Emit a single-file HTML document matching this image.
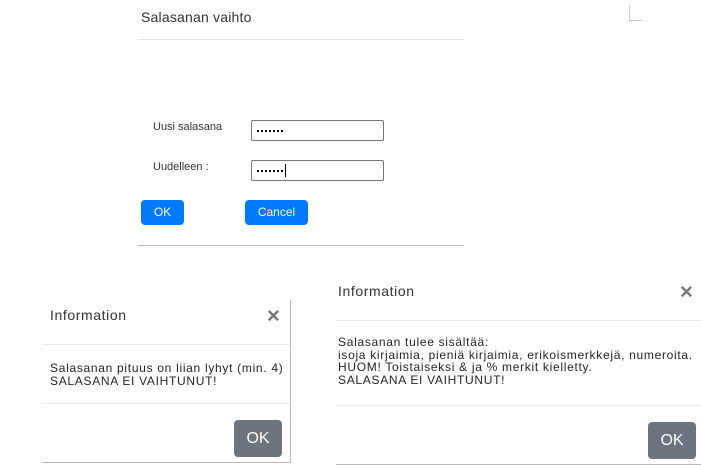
<!DOCTYPE html>
<html><head><style>
body{margin:0;width:701px;height:466px;background:#fff;position:relative;overflow:hidden;font-family:"Liberation Sans",sans-serif;color:#212529}
.a{position:absolute}
.inp{position:absolute;border:1px solid #767676;border-radius:2px;width:133px;height:21px;box-sizing:border-box;padding-left:5px}
.d{display:inline-block;width:2px;height:2px;background:#000;margin-right:2px;vertical-align:middle}
.inp .w{position:absolute;left:5px;top:9px;line-height:0}
.btn{position:absolute;background:#007bff;color:#fff;border-radius:4px;font-size:12px;text-align:center}
.gb{position:absolute;background:#6c757d;color:#fff;border-radius:4px;font-size:16px;text-align:center;width:48px;height:37px;line-height:37px}
.x{position:absolute;font-size:22px;color:#777;font-weight:bold}
.t{position:absolute;font-size:12px;line-height:12.5px;color:#212529;letter-spacing:0.7px}
</style></head><body>
<div class="a" style="left:141px;top:9px;font-size:14px;color:#333;letter-spacing:0.2px">Salasanan vaihto</div>
<div class="a" style="left:138px;top:39px;width:326px;height:1px;background:#e6e6e6"></div>
<div class="a" style="left:629px;top:5px;width:1px;height:15px;background:#ccc"></div>
<div class="a" style="left:629px;top:20px;width:13px;height:1px;background:#ccc"></div>
<div class="a" style="left:153px;top:121px;font-size:11px;color:#333">Uusi salasana</div>
<div class="a" style="left:153px;top:161px;font-size:11px;color:#333">Uudelleen :</div>
<div class="inp" style="left:251px;top:120px"><span class="w"><i class="d"></i><i class="d"></i><i class="d"></i><i class="d"></i><i class="d"></i><i class="d"></i><i class="d"></i></span></div>
<div class="inp" style="left:251px;top:160px"><span class="w"><i class="d"></i><i class="d"></i><i class="d"></i><i class="d"></i><i class="d"></i><i class="d"></i><i class="d"></i></span><span class="a" style="left:33px;top:3px;width:1px;height:13px;background:#000"></span></div>
<div class="btn" style="left:141px;top:200px;width:43px;height:25px;line-height:25px">OK</div>
<div class="btn" style="left:245px;top:200px;width:63px;height:25px;line-height:25px">Cancel</div>
<div class="a" style="left:138px;top:245px;width:326px;height:1px;background:#bbb"></div>

<div class="a" style="left:290px;top:300px;width:1px;height:163px;background:#bbb"></div>
<div class="a" style="left:42px;top:462px;width:249px;height:1px;background:#bbb"></div>
<div class="a" style="left:50px;top:307px;font-size:14px;color:#333;letter-spacing:0.6px">Information</div>
<div class="x" style="left:267px;top:303px">×</div>
<div class="a" style="left:42px;top:344px;width:248px;height:1px;background:#e9ecef"></div>
<div class="t" style="left:50px;top:362px">Salasanan pituus on liian lyhyt (min. 4)<br>SALASANA EI VAIHTUNUT!</div>
<div class="a" style="left:42px;top:403px;width:248px;height:1px;background:#e9ecef"></div>
<div class="gb" style="left:234px;top:420px">OK</div>

<div class="a" style="left:338px;top:283px;font-size:14px;color:#333;letter-spacing:0.6px">Information</div>
<div class="x" style="left:680px;top:279px">×</div>
<div class="a" style="left:336px;top:320px;width:365px;height:1px;background:#e9ecef"></div>
<div class="t" style="left:338px;top:336px">Salasanan tulee sisältää:<br>isoja kirjaimia, pieniä kirjaimia, erikoismerkkejä, numeroita.<br>HUOM! Toistaiseksi &amp; ja % merkit kielletty.<br>SALASANA EI VAIHTUNUT!</div>
<div class="a" style="left:336px;top:405px;width:365px;height:1px;background:#e9ecef"></div>
<div class="gb" style="left:648px;top:422px">OK</div>
<div class="a" style="left:336px;top:464px;width:365px;height:1px;background:#bbb"></div>
</body></html>
